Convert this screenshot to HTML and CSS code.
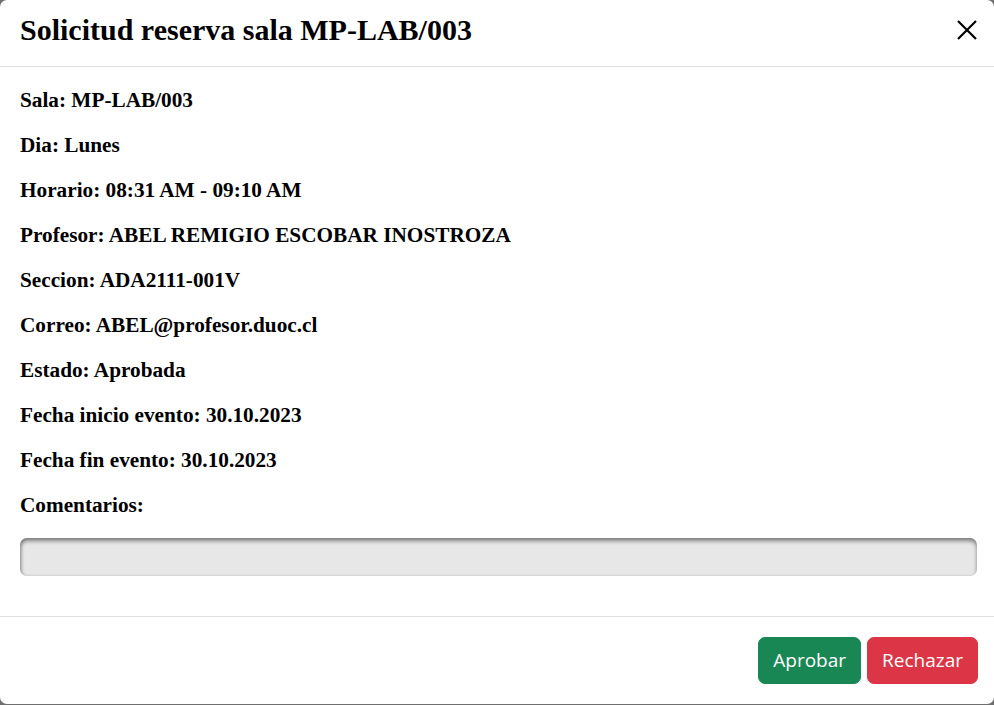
FILE: index.html
```html
<!DOCTYPE html>
<html lang="es">
<head>
<meta charset="utf-8">
<title>Solicitud reserva sala</title>
<link rel="stylesheet" href="styles.css">
</head>
<body>
<div class="modal">
  <div class="modal-header">
    <h2 class="modal-title">Solicitud reserva sala MP-LAB/003</h2>
    <button class="close" aria-label="Cerrar">
      <svg width="20" height="20" viewBox="0 0 20 20"><path d="M1 1 L19 19 M19 1 L1 19" stroke="#000" stroke-width="2.2" fill="none"/></svg>
    </button>
  </div>
  <div class="modal-body">
    <p class="field">Sala: MP-LAB/003</p>
    <p class="field">Dia: Lunes</p>
    <p class="field">Horario: 08:31 AM - 09:10 AM</p>
    <p class="field">Profesor: ABEL REMIGIO ESCOBAR INOSTROZA</p>
    <p class="field">Seccion: ADA2111-001V</p>
    <p class="field">Correo: ABEL@profesor.duoc.cl</p>
    <p class="field">Estado: Aprobada</p>
    <p class="field">Fecha inicio evento: 30.10.2023</p>
    <p class="field">Fecha fin evento: 30.10.2023</p>
    <p class="field">Comentarios:</p>
    <div class="comments"></div>
  </div>
  <div class="modal-footer">
    <button class="btn btn-success">Aprobar</button>
    <button class="btn btn-danger">Rechazar</button>
  </div>
</div>
</body>
</html>
```
FILE: styles.css
```css
html, body {
  margin: 0;
  padding: 0;
  background: #6f6f6f;
  height: 705px;
  overflow: hidden;
}
.modal {
  width: 994px;
  height: 704px;
  background: #fff;
  border-radius: 7px;
  display: flex;
  flex-direction: column;
  font-family: "Liberation Serif", "Times New Roman", serif;
  color: #000;
}
.modal-header {
  height: 67px;
  box-sizing: border-box;
  border-bottom: 1px solid #dee2e6;
  display: flex;
  align-items: center;
  justify-content: space-between;
  padding: 0 17px 0 20px;
}
.modal-title {
  margin: 0;
  font-size: 30px;
  font-weight: bold;
  line-height: 1;
  padding-bottom: 6px;
}
.close {
  background: none;
  border: 0;
  padding: 0;
  width: 20px;
  height: 20px;
  display: flex;
  align-items: center;
  justify-content: center;
  margin-bottom: 6px;
}
.modal-body {
  flex: 1;
  padding: 18px 17px 0 20px;
}
.field {
  margin: 0 0 15px 0;
  font-size: 21.25px;
  font-weight: bold;
  line-height: 30px;
}
.comments {
  margin-top: 18px;
  height: 38px;
  background: #e7e7e7;
  border-radius: 7px;
  box-shadow: inset 0 3px 4px rgba(0,0,0,0.45), inset 2px 0 3px rgba(0,0,0,0.12);
}
.modal-footer {
  height: 88px;
  box-sizing: border-box;
  border-top: 1px solid #dee2e6;
  display: flex;
  align-items: center;
  justify-content: flex-end;
  gap: 6px;
  padding: 0 16px 0 20px;
}
.btn {
  font-family: "Open Sans", "Noto Sans", sans-serif;
  font-size: 19px;
  line-height: 29px;
  padding: 8px 14px;
  border-radius: 7px;
  border: 1px solid transparent;
  color: #fff;
}
.btn-success {
  background: #198754;
  border-color: #198754;
}
.btn-danger {
  background: #dc3545;
  border-color: #dc3545;
}
```
